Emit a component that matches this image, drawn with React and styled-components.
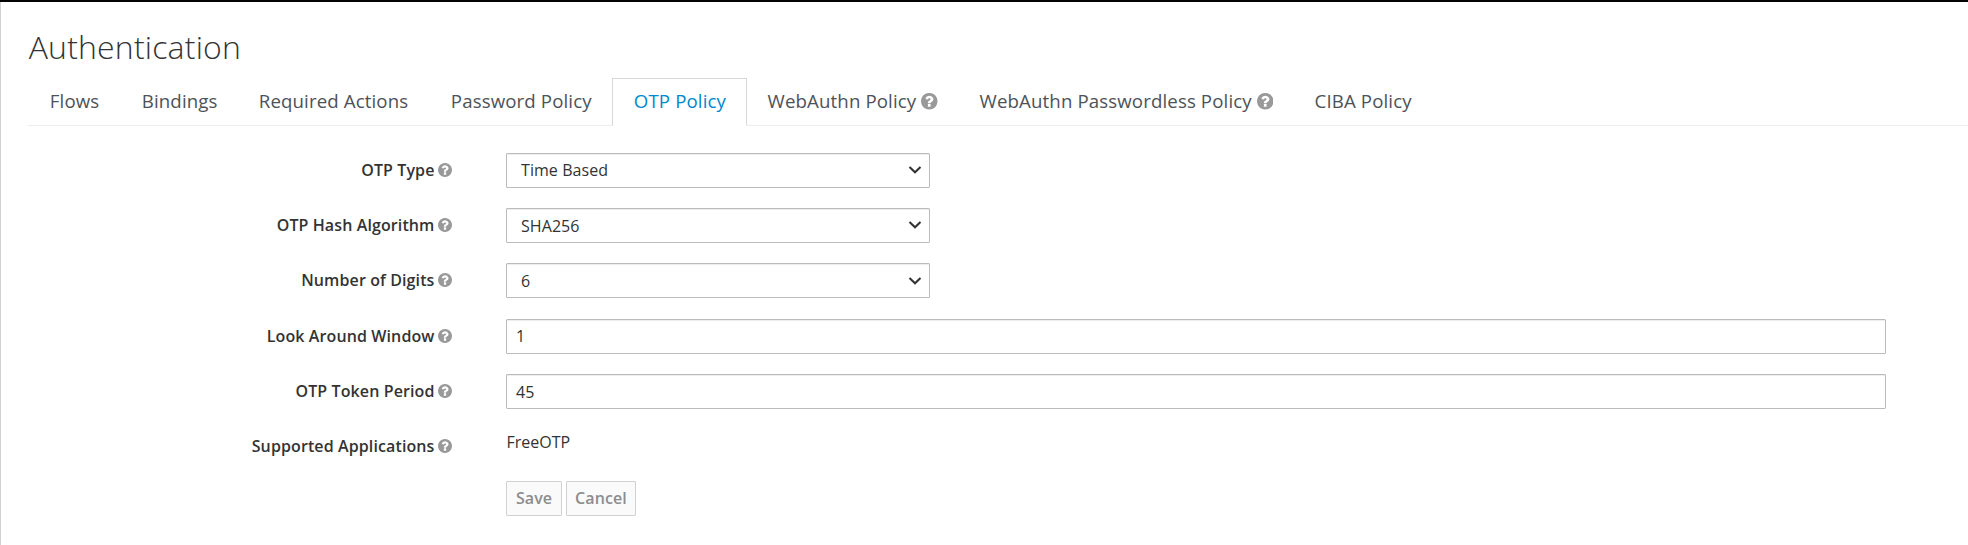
import React from "react";
import styled, { createGlobalStyle } from "styled-components";

const GlobalStyle = createGlobalStyle`
  *, *::before, *::after { box-sizing: border-box; }
  body {
    margin: 0;
    background: #fff;
    color: #333;
    font-family: "Open Sans", "Liberation Sans", sans-serif;
    font-size: 16px;
    overflow: hidden;
  }
`;

const Page = styled.main`
  height: 545px;
  border-top: 2px solid #030303;
`;

const Content = styled.div`
  height: 100%;
  border-left: 1px solid #d1d1d1;
  padding: 24px 0 0 27px;
`;

const Title = styled.h1`
  margin: 0;
  padding-left: 0.7px;
  height: 52px;
  font-size: 32px;
  font-weight: 300;
  line-height: 42px;
  letter-spacing: 0.18px;
`;

const Tabs = styled.nav`
  display: flex;
  height: 48px;
  border-bottom: 1px solid #ededed;
`;

const Tab = styled.a`
  display: flex;
  align-items: center;
  gap: 5px;
  flex: none;
  width: ${(p) => p.$width}px;
  height: 48px;
  padding: 0 0 3px ${(p) => p.$indent || 20.8}px;
  border: 1px solid ${(p) => (p.$active ? "#d8d8d8" : "transparent")};
  border-bottom-color: ${(p) => (p.$active ? "#fff" : "transparent")};
  background: ${(p) => (p.$active ? "#fff" : "transparent")};
  color: ${(p) => (p.$active ? "#0088ce" : "#4d5258")};
  font-size: 18.667px;
  letter-spacing: 0.12px;
  white-space: nowrap;

  svg { margin-top: 2px; }
`;

const Form = styled.form`
  padding-top: 26.7px;
`;

const Row = styled.div`
  display: grid;
  grid-template-columns: 424px 1fr;
  column-gap: 54px;
  height: 55.3px;
  padding-right: 82px;
`;

const Label = styled.label`
  display: flex;
  justify-content: flex-end;
  align-items: center;
  gap: 3.5px;
  height: 34px;
  font-weight: 600;
  letter-spacing: 0.11px;
  white-space: nowrap;
`;

const Control = styled.input`
  width: 100%;
  height: 35px;
  margin: 0;
  padding: ${(p) => (p.$lowered ? 2 : 0)}px 9px 0;
  border: 1px solid #bbb;
  border-radius: 1px;
  outline: none;
  background: #fff;
  box-shadow: inset 0 1px 1px rgba(3, 3, 3, 0.075);
  color: #333;
  font: inherit;
`;

const SelectFrame = styled.div`
  display: grid;
  grid-template-columns: 424px;
  align-items: start;
`;

const Select = styled(Control)`
  grid-area: 1 / 1;
  padding-left: 14px;
  letter-spacing: 0.07px;
  appearance: none;
`;

const Chevron = styled.svg`
  grid-area: 1 / 1;
  justify-self: end;
  width: 14px;
  height: 10px;
  margin: 12.5px 8px 0 0;
  pointer-events: none;
`;

const StaticText = styled.span`
  padding: 1px 0 0 0.5px;
  height: 30px;
  line-height: 24px;
`;

const Actions = styled.div`
  display: flex;
  gap: 4px;
  padding: 52px 0 0 478px;
  margin-top: -55.3px;
`;

const Button = styled.button`
  width: ${(p) => p.$width}px;
  height: 35px;
  padding: 0 0 1px;
  border: 1px solid #d1d1d1;
  border-radius: 1px;
  background: #fafafa;
  color: #8b8d8f;
  font: inherit;
  font-weight: 600;
  letter-spacing: 0.1px;
`;

const HelpSvg = styled.svg`
  flex: none;
  width: ${(p) => p.$size}px;
  height: ${(p) => p.$size}px;
  fill: #999;
`;

const Help = ({ size = 14 }) => (
  <HelpSvg $size={size} viewBox="128 128 1536 1536" aria-hidden="true">
    <path d="M1024 1376v-192q0-14-9-23t-23-9h-192q-14 0-23 9t-9 23v192q0 14 9 23t23 9h192q14 0 23-9t9-23zm256-672q0-88-55.5-163t-138.5-116-170-41q-243 0-371 213-15 24 8 42l132 100q7 6 19 6 16 0 25-12 53-68 86-92 34-24 86-24 48 0 85.5 26t37.5 59q0 38-20 61t-68 45q-63 28-115.5 86.5t-52.5 125.5v36q0 14 9 23t23 9h192q14 0 23-9t9-23q0-19 21.5-49.5t54.5-49.5q32-18 49-28.5t46-35 44.5-48 28-60.5 12.5-81zm384 192q0 209-103 385.5t-279.5 279.5-385.5 103-385.5-103-279.5-279.5-103-385.5 103-385.5 279.5-279.5 385.5-103 385.5 103 279.5 279.5 103 385.5z" />
  </HelpSvg>
);

const tabs = [
  { label: "Flows", width: 92 },
  { label: "Bindings", width: 117 },
  { label: "Required Actions", width: 192 },
  { label: "Password Policy", width: 183 },
  { label: "OTP Policy", width: 135, active: true },
  { label: "WebAuthn Policy", width: 212, indent: 19.6, help: true },
  { label: "WebAuthn Passwordless Policy", width: 335, indent: 19.6, help: true },
  { label: "CIBA Policy", width: 140, indent: 19.6 },
];

const selects = [
  { label: "OTP Type", value: "Time Based" },
  { label: "OTP Hash Algorithm", value: "SHA256", lowered: true },
  { label: "Number of Digits", value: "6" },
];

const inputs = [
  { label: "Look Around Window", value: "1" },
  { label: "OTP Token Period", value: "45", lowered: true },
];

export default function App() {
  return (
    <Page>
      <GlobalStyle />
      <Content>
        <Title>Authentication</Title>
        <Tabs>
          {tabs.map((t) => (
            <Tab key={t.label} $width={t.width} $indent={t.indent} $active={t.active}>
              <span>{t.label}</span>
              {t.help && <Help size={16.5} />}
            </Tab>
          ))}
        </Tabs>
        <Form>
          {selects.map((f) => (
            <Row key={f.label}>
              <Label>
                <span>{f.label}</span>
                <Help />
              </Label>
              <SelectFrame>
                <Select as="select" defaultValue={f.value} $lowered={f.lowered}>
                  <option>{f.value}</option>
                </Select>
                <Chevron viewBox="0 0 14 10">
                  <path d="M1.5 2 7 7.2 12.5 2" fill="none" stroke="#333" strokeWidth="2.1" />
                </Chevron>
              </SelectFrame>
            </Row>
          ))}
          {inputs.map((f) => (
            <Row key={f.label}>
              <Label>
                <span>{f.label}</span>
                <Help />
              </Label>
              <Control defaultValue={f.value} $lowered={f.lowered} />
            </Row>
          ))}
          <Row>
            <Label as="span">
              <span>Supported Applications</span>
              <Help />
            </Label>
            <StaticText>FreeOTP</StaticText>
          </Row>
          <Actions>
            <Button type="button" $width={56}>Save</Button>
            <Button type="button" $width={70}>Cancel</Button>
          </Actions>
        </Form>
      </Content>
    </Page>
  );
}
